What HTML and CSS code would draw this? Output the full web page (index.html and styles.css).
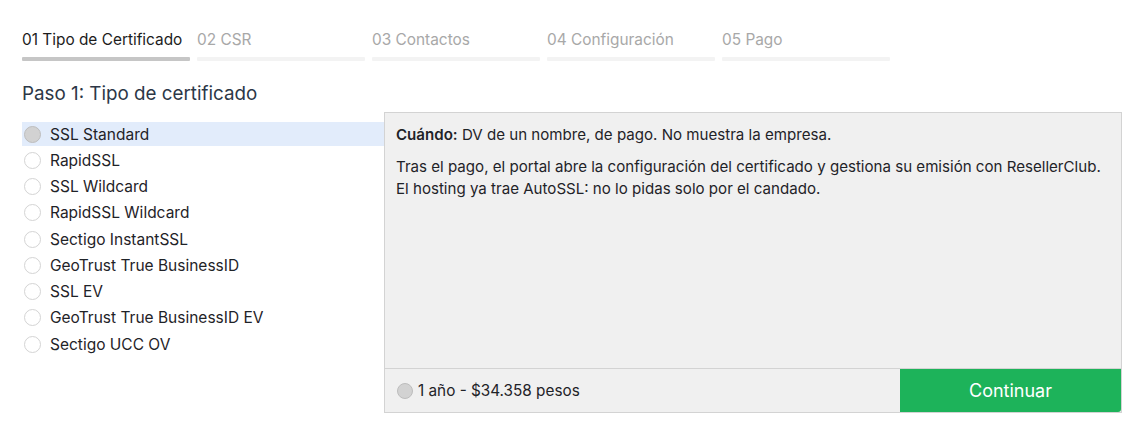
FILE: index.html
```html
<!DOCTYPE html>
<html lang="es">
<head>
<meta charset="utf-8">
<title>Paso 1: Tipo de certificado</title>
<link rel="stylesheet" href="styles.css">
</head>
<body>
<div class="page">
  <nav class="steps">
    <div class="step active"><span class="step-label">01 Tipo de Certificado</span><span class="step-bar"></span></div>
    <div class="step"><span class="step-label">02 CSR</span><span class="step-bar"></span></div>
    <div class="step"><span class="step-label">03 Contactos</span><span class="step-bar"></span></div>
    <div class="step"><span class="step-label">04 Configuración</span><span class="step-bar"></span></div>
    <div class="step"><span class="step-label">05 Pago</span><span class="step-bar"></span></div>
  </nav>
  <h1 class="title">Paso 1: Tipo de certificado</h1>
  <div class="main">
    <ul class="options">
      <li class="option selected"><span class="radio checked"></span>SSL Standard</li>
      <li class="option"><span class="radio"></span>RapidSSL</li>
      <li class="option"><span class="radio"></span>SSL Wildcard</li>
      <li class="option"><span class="radio"></span>RapidSSL Wildcard</li>
      <li class="option"><span class="radio"></span>Sectigo InstantSSL</li>
      <li class="option"><span class="radio"></span>GeoTrust True BusinessID</li>
      <li class="option"><span class="radio"></span>SSL EV</li>
      <li class="option"><span class="radio"></span>GeoTrust True BusinessID EV</li>
      <li class="option"><span class="radio"></span>Sectigo UCC OV</li>
    </ul>
    <section class="panel">
      <div class="panel-body">
        <p><strong>Cuándo:</strong> DV de un nombre, de pago. No muestra la empresa.</p>
        <p>Tras el pago, el portal abre la configuración del certificado y gestiona su emisión con ResellerClub. El hosting ya trae AutoSSL: no lo pidas solo por el candado.</p>
      </div>
      <div class="panel-foot">
        <label class="price"><span class="radio checked small"></span>1 año - $34.358 pesos</label>
        <button class="btn">Continuar</button>
      </div>
    </section>
  </div>
</div>
</body>
</html>
```
FILE: styles.css
```css
* { box-sizing: border-box; }
html, body { margin: 0; padding: 0; background: #fff; }
body {
  font-family: Inter, "Noto Sans", "Liberation Sans", sans-serif;
  color: #1f2328;
  font-size: 15px;
}
.page { padding: 30px 20px 0 22px; }
.steps { display: flex; gap: 7px; }
.step { width: 168px; display: flex; flex-direction: column; }
.step-label { font-size: 15.4px; line-height: 20px; color: #a8a8a8; }
.step.active .step-label { color: #1c1c1c; }
.step-bar { height: 4px; margin-top: 7px; background: #f3f3f3; border-radius: 1px; }
.step.active .step-bar { background: #c6c6c6; }
.title {
  margin: 20px 0 0;
  font-size: 18.8px;
  line-height: 26px;
  font-weight: 400;
  color: #2c3747;
}
.main { display: flex; margin-top: 5px; }
.options { list-style: none; margin: 9px 0 0; padding: 0; width: 362px; }
.option {
  height: 26.25px;
  display: flex;
  align-items: center;
  gap: 9px;
  padding-left: 2px;
  font-size: 15.5px;
  color: #1f2328;
}
.option.selected { background: #e2ecfb; height: 24px; margin: 1px 0 1.25px; }
.radio {
  width: 17px; height: 17px;
  border-radius: 50%;
  border: 1px solid #d4d4d4;
  background: #fff;
  flex: none;
}
.radio.checked { background: #d2d2d2; border-color: #bdbdbd; }
.panel {
  width: 738px;
  height: 301px;
  background: #f0f0f0;
  border: 1px solid #d3d3d3;
  display: flex;
  flex-direction: column;
}
.panel-body { flex: 1; padding: 11px 11px 0; font-size: 15.1px; line-height: 22px; color: #1f2328; }
.panel-body p { margin: 0 0 10px; }
.panel-body strong { font-weight: 600; }
.panel-foot {
  height: 44px;
  border-top: 1px solid #d3d3d3;
  display: flex;
  align-items: stretch;
}
.price {
  flex: 1;
  display: flex;
  align-items: center;
  gap: 5px;
  padding-left: 12px;
  font-size: 15.3px;
  color: #1f2328;
}
.radio.small { width: 16px; height: 16px; }
.btn {
  width: 221px;
  border: 0;
  background: #1db35a;
  color: #fff;
  font-family: inherit;
  font-size: 18px;
  border-radius: 0 0 3px 0;
  padding: 0;
}
```
